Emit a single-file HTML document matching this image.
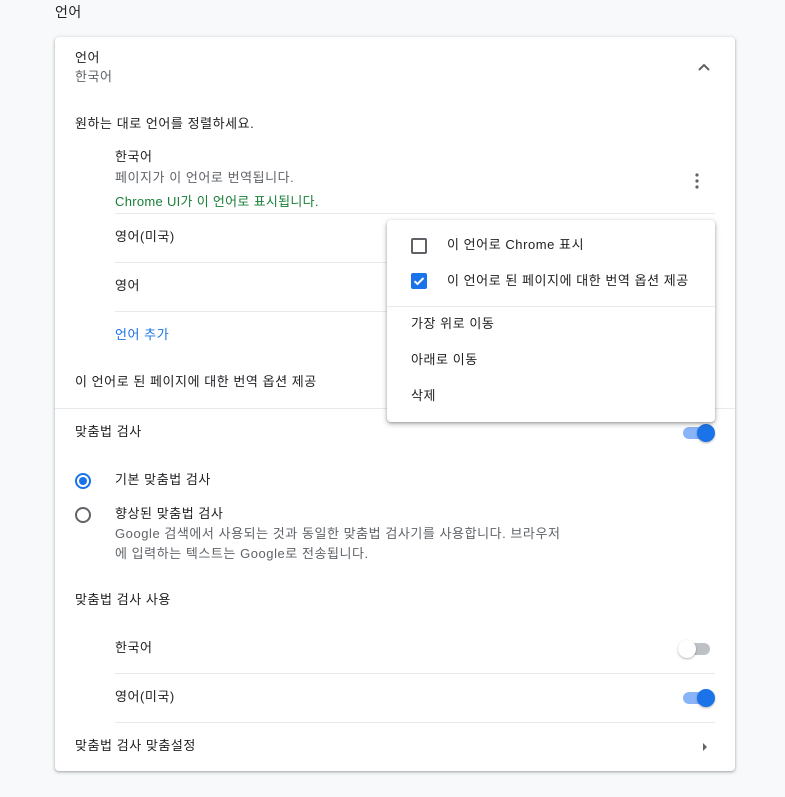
<!DOCTYPE html>
<html><head><meta charset="utf-8"><style>
*{margin:0;padding:0;box-sizing:border-box}
body{width:785px;height:797px;background:#f8f9fa;font-family:"Liberation Sans","Noto Sans CJK KR",sans-serif;font-size:13px;color:#202124;position:relative;overflow:hidden}
.a{position:absolute;white-space:nowrap;line-height:18px;letter-spacing:0.55px}
.g{color:#5f6368}
.card{position:absolute;left:55px;top:37px;width:680px;height:734px;background:#fff;border-radius:4px;box-shadow:0 1px 2px rgba(60,64,67,.3),0 1px 3px 1px rgba(60,64,67,.15)}
.hr{position:absolute;height:1px;background:#e8eaed}
.tg{position:absolute;width:32px;height:14px}
.tg .t{position:absolute;left:2px;top:1px;width:28px;height:12px;border-radius:6px;background:#8ab4f8}
.tg .k{position:absolute;left:16px;top:-2px;width:18px;height:18px;border-radius:50%;background:#1a73e8;box-shadow:0 1px 2px rgba(0,0,0,.3)}
.tg.off .t{background:#bdc1c6}.tg.off .k{left:-2px;background:#fff}
.menu{position:absolute;left:387px;top:220px;width:328px;height:202px;background:#fff;border-radius:4px;box-shadow:0 2px 6px rgba(60,64,67,.35),0 1px 2px rgba(60,64,67,.3)}
</style></head><body>
<div class="a" style="left:55px;top:3px;font-size:14px">언어</div>
<div class="card"></div>
<div class="a" style="left:75px;top:49px">언어</div>
<div class="a g" style="left:75px;top:68px">한국어</div>
<svg class="a" style="left:697px;top:63px" width="14" height="10"><path d="M2 7L7 2L12 7" stroke="#5f6368" stroke-width="2" fill="none"/></svg>
<div class="a" style="left:75px;top:115px">원하는 대로 언어를 정렬하세요.</div>
<div class="a" style="left:115px;top:148px">한국어</div>
<div class="a g" style="left:115px;top:169px">페이지가 이 언어로 번역됩니다.</div>
<div class="a" style="left:115px;top:193px;color:#188038;letter-spacing:0.3px">Chrome UI가 이 언어로 표시됩니다.</div>
<svg class="a" style="left:694px;top:173px" width="6" height="16"><circle cx="3" cy="2" r="1.6" fill="#5f6368"/><circle cx="3" cy="8" r="1.6" fill="#5f6368"/><circle cx="3" cy="14" r="1.6" fill="#5f6368"/></svg>
<div class="hr" style="left:115px;top:213px;width:600px"></div>
<div class="a" style="left:115px;top:228px">영어(미국)</div>
<div class="hr" style="left:115px;top:262px;width:600px"></div>
<div class="a" style="left:115px;top:277px">영어</div>
<div class="hr" style="left:115px;top:311px;width:600px"></div>
<div class="a" style="left:115px;top:326px;color:#1a73e8">언어 추가</div>
<div class="a" style="left:75px;top:373px">이 언어로 된 페이지에 대한 번역 옵션 제공</div>
<div class="hr" style="left:55px;top:408px;width:680px"></div>
<div class="a" style="left:75px;top:423px">맞춤법 검사</div>
<div class="tg" style="left:681px;top:426px"><div class="t"></div><div class="k"></div></div>
<svg class="a" style="left:74px;top:472px" width="18" height="18"><circle cx="9" cy="9" r="7" stroke="#1a73e8" stroke-width="2" fill="none"/><circle cx="9" cy="9" r="4" fill="#1a73e8"/></svg>
<div class="a" style="left:115px;top:471px">기본 맞춤법 검사</div>
<svg class="a" style="left:74px;top:506px" width="18" height="18"><circle cx="9" cy="9" r="7" stroke="#5f6368" stroke-width="2" fill="none"/></svg>
<div class="a" style="left:115px;top:505px">향상된 맞춤법 검사</div>
<div class="a g" style="left:115px;top:525px">Google 검색에서 사용되는 것과 동일한 맞춤법 검사기를 사용합니다. 브라우저</div>
<div class="a g" style="left:115px;top:545px">에 입력하는 텍스트는 Google로 전송됩니다.</div>
<div class="a" style="left:75px;top:591px">맞춤법 검사 사용</div>
<div class="a" style="left:115px;top:639px">한국어</div>
<div class="tg off" style="left:680px;top:642px"><div class="t"></div><div class="k"></div></div>
<div class="hr" style="left:115px;top:673px;width:600px"></div>
<div class="a" style="left:115px;top:688px">영어(미국)</div>
<div class="tg" style="left:681px;top:691px"><div class="t"></div><div class="k"></div></div>
<div class="hr" style="left:115px;top:722px;width:600px"></div>
<div class="a" style="left:75px;top:737px">맞춤법 검사 맞춤설정</div>
<svg class="a" style="left:702px;top:742px" width="6" height="10"><path d="M1 1L5 5L1 9Z" fill="#5f6368"/></svg>
<div class="menu"></div>
<div class="a" style="left:411px;top:238px;width:16px;height:16px;border:2px solid #5f6368;border-radius:2px"></div>
<div class="a" style="left:447px;top:236px">이 언어로 Chrome 표시</div>
<svg class="a" style="left:411px;top:273px" width="16" height="16"><rect width="16" height="16" rx="2" fill="#1a73e8"/><path d="M3.5 8.2L6.5 11L12.5 5" stroke="#fff" stroke-width="2" fill="none"/></svg>
<div class="a" style="left:447px;top:272px">이 언어로 된 페이지에 대한 번역 옵션 제공</div>
<div class="hr" style="left:387px;top:306px;width:328px"></div>
<div class="a" style="left:411px;top:315px">가장 위로 이동</div>
<div class="a" style="left:411px;top:351px">아래로 이동</div>
<div class="a" style="left:411px;top:387px">삭제</div>
</body></html>
